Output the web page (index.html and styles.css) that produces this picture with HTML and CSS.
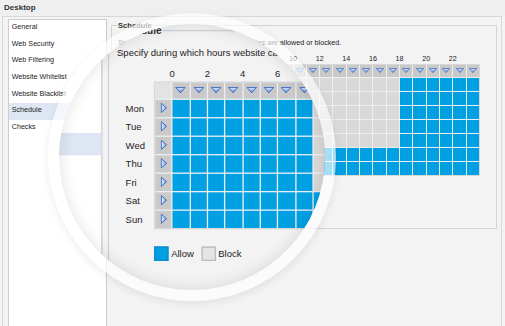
FILE: index.html
```html
<!DOCTYPE html>
<html lang="en">
<head>
    <meta charset="UTF-8">
    <meta name="viewport" content="width=device-width, initial-scale=1.0">
    <title>Desktop - Schedule</title>
    <link rel="stylesheet" href="styles.css">
</head>
<body>
    <div class="page">
        <div class="titlebar">Desktop</div>
        <div class="frame">
            <ul class="nav">
                <li>General</li>
                <li>Web Security</li>
                <li>Web Filtering</li>
                <li>Website Whitelist</li>
                <li>Website Blacklist</li>
                <li class="active">Schedule</li>
                <li>Checks</li>
            </ul>
            <fieldset class="group">
                <legend>Schedule</legend>
                <p class="hint">Specify during which hours website categories are allowed or blocked.</p>
                <div class="schedule">
                    <div class="days"></div>
                    <div class="table">
                        <div class="hours"></div>
                        <div class="grid"></div>
                    </div>
                </div>
                <div class="key">
                    <span class="swatch allow"></span><span class="key-label">Allow</span>
                    <span class="swatch block"></span><span class="key-label">Block</span>
                </div>
            </fieldset>
        </div>
    </div>

    <div class="lens"><div class="lens-view"></div></div>

    <script>
        const days = ['Mon', 'Tue', 'Wed', 'Thu', 'Fri', 'Sat', 'Sun'];
        const downIcon = '<svg width="8" height="5" viewBox="0 0 8 5"><defs><linearGradient id="gd" x1="0" y1="0" x2="0" y2="1"><stop offset="0" stop-color="#dce9fb"/><stop offset="1" stop-color="#5d8fe0"/></linearGradient></defs><polygon points="0.4,0.5 7.6,0.5 4,4.6" fill="url(#gd)" stroke="#2f62bd" stroke-width="0.7" stroke-linejoin="round"/></svg>';
        const rightIcon = '<svg width="5" height="8" viewBox="0 0 5 8"><defs><linearGradient id="gr" x1="0" y1="0" x2="1" y2="0"><stop offset="0" stop-color="#e4eefc"/><stop offset="1" stop-color="#7fa6e6"/></linearGradient></defs><polygon points="0.5,0.5 4.5,4 0.5,7.5" fill="url(#gr)" stroke="#2f62bd" stroke-width="0.7" stroke-linejoin="round"/></svg>';

        // work hours on weekdays are blocked
        function isBlocked(day, hour) {
            return day < 5 && hour >= 8 && hour < 18;
        }

        let hoursHtml = '<span></span>';
        let gridHtml = '<div class="corner"></div>';
        for (let h = 0; h < 24; h++) {
            hoursHtml += h % 2 === 0 ? `<span>${h}</span>` : '<span></span>';
            gridHtml += `<div class="col-head">${downIcon}</div>`;
        }
        days.forEach((day, d) => {
            gridHtml += `<div class="row-head">${rightIcon}</div>`;
            for (let h = 0; h < 24; h++) {
                gridHtml += `<div class="${isBlocked(d, h) ? 'block' : 'allow'}"></div>`;
            }
        });

        document.querySelector('.days').innerHTML = days.map(d => `<div class="day">${d}</div>`).join('');
        document.querySelector('.hours').innerHTML = hoursHtml;
        document.querySelector('.grid').innerHTML = gridHtml;

        // magnified copy under the lens
        document.querySelector('.lens-view').append(document.querySelector('.page').cloneNode(true));
    </script>
</body>
</html>
```

FILE: styles.css
```css
body {
    margin: 0;
    background: #f3f3f3;
    font-family: "Liberation Sans", Arial, sans-serif;
    font-size: 7.2px;
    color: #1b1b1b;
    overflow: hidden;
}
.page {
    width: 505px;
    height: 326px;
    background: #f3f3f3;
    overflow: hidden;
}
.titlebar {
    height: 16px;
    line-height: 16px;
    padding-left: 4px;
    font-size: 8px;
    font-weight: bold;
    color: #333;
    background: #efefef;
}
.frame {
    display: flex;
    align-items: flex-start;
    height: 310px;
    margin: 0 3px 0 2px;
    padding: 2px 4px 0 5px;
    border: 1px solid #d7d7d7;
    border-bottom: none;
    box-sizing: border-box;
}
.nav {
    width: 99px;
    height: 100%;
    margin: 0;
    padding: 0;
    list-style: none;
    background: #fff;
    border: 1px solid #cdcdcd;
    border-bottom: none;
    box-sizing: border-box;
}
.nav li {
    height: 16.67px;
    line-height: 14px;
    padding-left: 2.7px;
    white-space: nowrap;
}
.nav .active {
    background: #dde6f2;
}
.group {
    flex: 1;
    min-width: 0;
    height: 208px;
    margin: 1.5px 0 0 4px;
    padding: 0 6px;
    border: 1px solid #d1d3da;
    box-sizing: border-box;
}
.group legend {
    padding: 0 1px 0 0;
    font-size: 7.6px;
    font-weight: bold;
    line-height: 10px;
    color: #333;
}
.hint {
    margin: 7px 0 0;
    line-height: 10px;
    white-space: nowrap;
}
.schedule {
    display: flex;
    margin-top: 5px;
}
.days {
    width: 28px;
    padding: 25px 0 0 6.5px;
    box-sizing: border-box;
}
.day {
    height: 14px;
    line-height: 14px;
}
.table {
    width: 334px;
}
.hours {
    display: grid;
    grid-template-columns: repeat(25, 1fr);
    column-gap: 1px;
    height: 11px;
    line-height: 11px;
    padding: 0 1px;
}
.hours span {
    display: flex;
    justify-content: center;
    width: 0;
    margin-left: -0.5px;
}
.grid {
    display: grid;
    grid-template-columns: repeat(25, 1fr);
    grid-template-rows: 12px repeat(7, 13px);
    gap: 1px;
    border: 1px solid #d8d8d8;
    background: #eaeff2;
    box-sizing: border-box;
}
.corner {
    background: #e3e3e3;
}
.col-head,
.row-head {
    display: flex;
    align-items: center;
    justify-content: center;
    background: #c9c9c9;
}
.col-head svg,
.row-head svg {
    display: block;
}
.allow {
    background: #00a0e3;
}
.block {
    background: #dbd8d8;
}
.key {
    display: flex;
    align-items: center;
    margin: 13px 0 0 28px;
}
.swatch {
    width: 11px;
    height: 11px;
    box-sizing: border-box;
}
.swatch.allow {
    border: 1px solid #0b8ccd;
}
.swatch.block {
    margin-left: 5.5px;
    background: #e7e4e4;
    border: 1px solid #b9bac4;
}
.key-label {
    margin-left: 2px;
    line-height: 11px;
}
.lens {
    position: absolute;
    left: 48px;
    top: 13px;
    width: 288px;
    height: 288px;
    border: 11px solid rgba(255, 255, 255, 0.65);
    border-radius: 50%;
    overflow: hidden;
    box-sizing: border-box;
    box-shadow: 0 3px 8px rgba(0, 0, 0, 0.08);
}
.lens-view {
    position: absolute;
    left: -59px;
    top: -24px;
    width: 505px;
    height: 326px;
    transform: scale(1.32);
    transform-origin: 121px 9.5px;
}
.lens::after {
    content: '';
    position: absolute;
    inset: 0;
    border-radius: 50%;
    box-shadow: inset 0 0 16px rgba(0, 0, 0, 0.12);
}
```
